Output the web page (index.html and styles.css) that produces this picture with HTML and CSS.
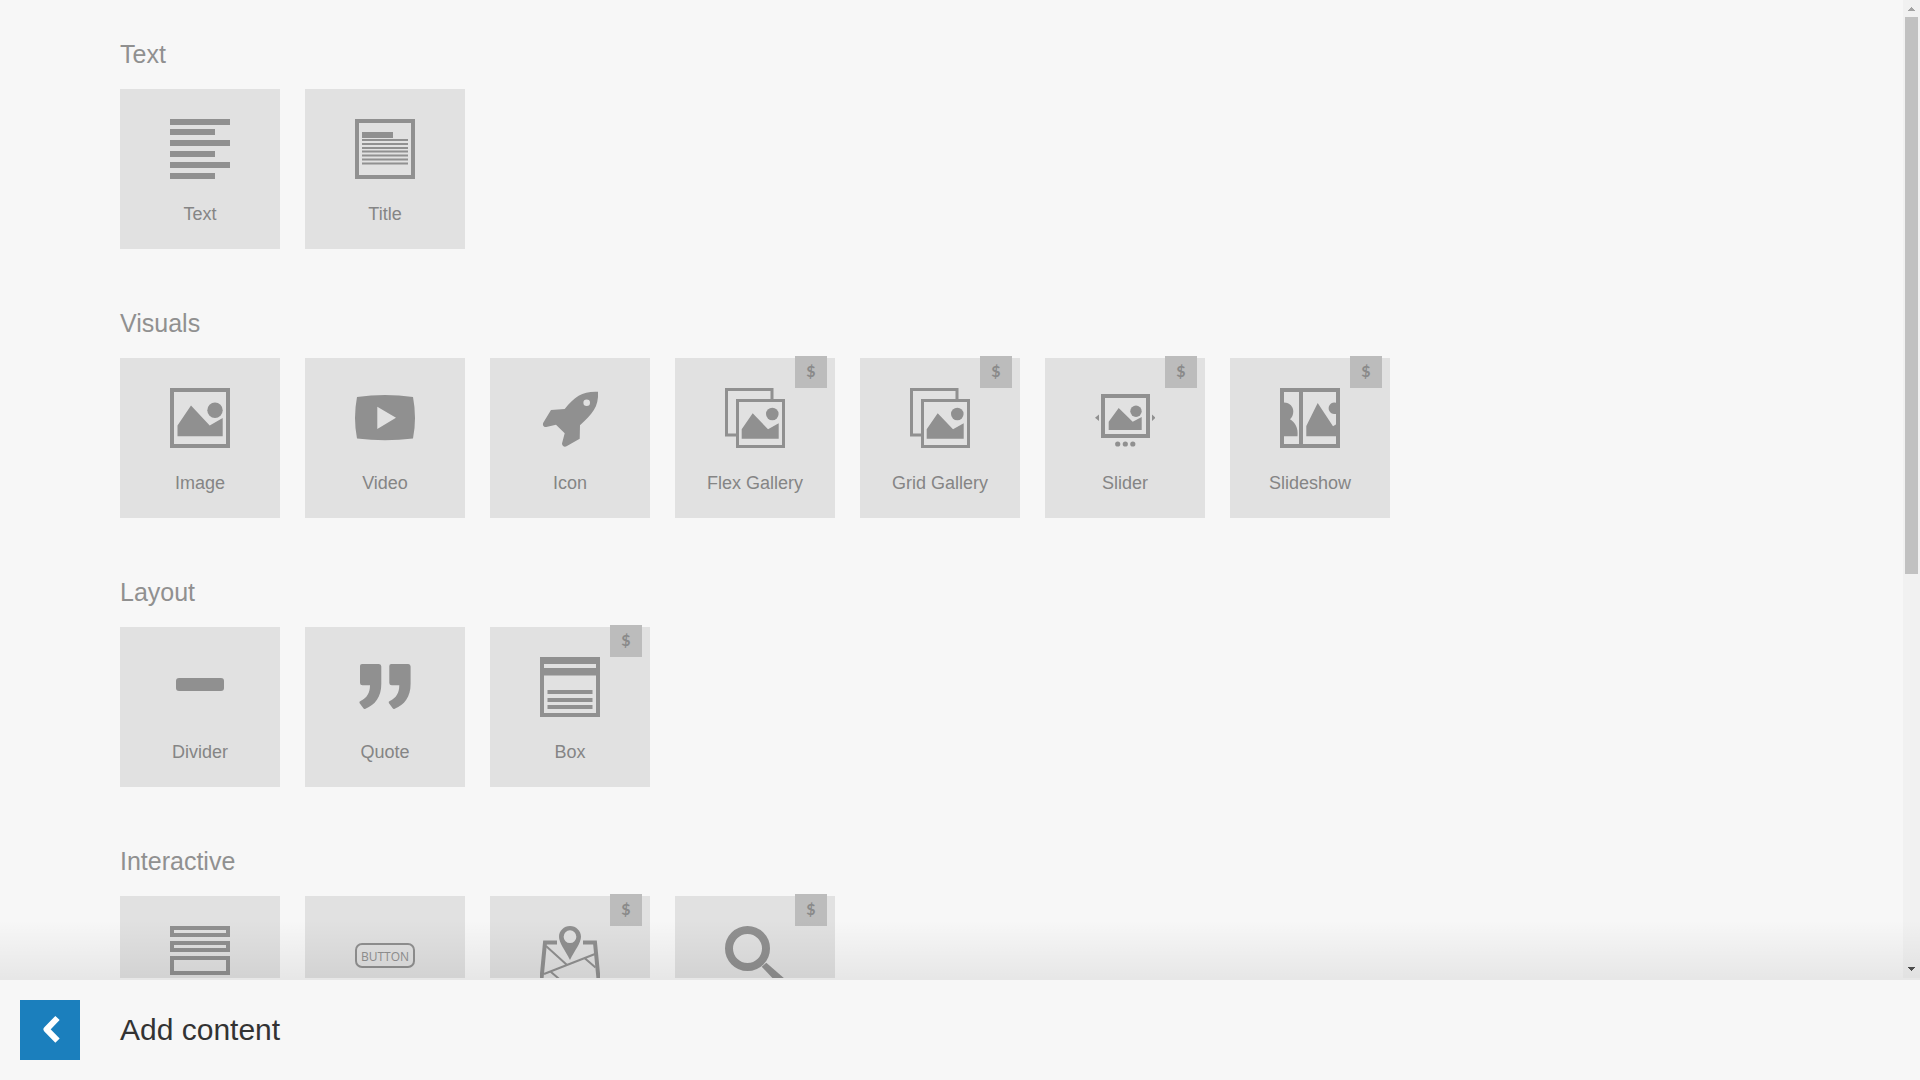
FILE: index.html
```html
<!DOCTYPE html>
<html lang="en">
<head>
<meta charset="utf-8">
<title>Add content</title>
<link rel="stylesheet" href="styles.css">
</head>
<body>
<div class="viewport">
<main class="picker">
  <section class="group">
    <h2 class="group-title">Text</h2>
    <div class="tiles">
      <button class="tile" type="button">
        <svg class="icon" viewBox="0 0 60 60"><path d="M0 0h60v6H0zM0 10h45v6H0zM0 21h60v6H0zM0 32h45v6H0zM0 43h60v6H0zM0 54h45v6H0z"/></svg>
        <span>Text</span>
      </button>
      <button class="tile" type="button">
        <svg class="icon" viewBox="0 0 60 60"><path class="line w4" d="M2 2h56v56H2z"/><path d="M7 13h31v6H7zM7 20h46v2H7zM7 24h46v2H7zM7 28h46v2H7zM7 31.500h46v2H7zM7 35.500h46v2H7zM7 39.500h46v2H7zM7 43.500h46v2H7z"/></svg>
        <span>Title</span>
      </button>
    </div>
  </section>

  <section class="group">
    <h2 class="group-title">Visuals</h2>
    <div class="tiles">
      <button class="tile" type="button">
        <svg class="icon" viewBox="0 0 60 60"><path class="line w4" d="M2 2h56v56H2z"/><path d="M7.500 37.500L21 17.500l18.700 20L52.700 30v18.300H7.500z"/><circle cx="45" cy="22.300" r="7.700"/></svg>
        <span>Image</span>
      </button>
      <button class="tile" type="button">
        <svg class="icon" viewBox="0 0 60 60"><path fill-rule="evenodd" d="M2 9Q30 5 58 9Q62 30 58 50.500Q30 54 2 50.500Q-2 30 2 9zM22.300 18.700V41L41 29.700z"/></svg>
        <span>Video</span>
      </button>
      <button class="tile" type="button">
        <svg class="icon" viewBox="0 0 60 60"><path fill-rule="evenodd" d="M58 3.700C43 3 35 8 24.700 21L11 22L3.400 34.500C2 37 4 39.500 6.300 39L16 36.700L24.700 45.300L22 55.500C22 58 24.500 59.500 26.500 58.300L39.700 50.700L40 37.300C52 26 59 19 58 3.700zM46.700 11.400a3.300 3.300 0 1 1 0 6.600a3.300 3.300 0 1 1 0-6.600z"/></svg>
        <span>Icon</span>
      </button>
      <button class="tile" type="button">
        <svg class="icon" viewBox="0 0 60 60"><path class="line w3" d="M11 47H1.500V1.500H47V11M12.500 12.500h46v46h-46z"/><path d="M16.700 41.300l11-16 15.300 16 10.700-6v15.400h-37z"/><circle cx="47.300" cy="26" r="6.300"/></svg>
        <span>Flex Gallery</span><span class="badge">$</span>
      </button>
      <button class="tile" type="button">
        <svg class="icon" viewBox="0 0 60 60"><path class="line w3" d="M11 47H1.500V1.500H47V11M12.500 12.500h46v46h-46z"/><path d="M16.700 41.300l11-16 15.300 16 10.700-6v15.400h-37z"/><circle cx="47.300" cy="26" r="6.300"/></svg>
        <span>Grid Gallery</span><span class="badge">$</span>
      </button>
      <button class="tile" type="button">
        <svg class="icon" viewBox="0 0 60 60"><path class="line w4" d="M8 8h45v40H8z"/><path d="M13.700 33.700l10-13.700 14 13.700 9-4.700v13h-33zM0 29.700l4-3.200v6.400zM60.500 29.700l-3.500-3.200v6.400z"/><circle cx="41" cy="23.300" r="5.700"/><circle cx="22.700" cy="56" r="2.600"/><circle cx="30.300" cy="56" r="2.600"/><circle cx="37.800" cy="56" r="2.600"/></svg>
        <span>Slider</span><span class="badge">$</span>
      </button>
      <button class="tile" type="button">
        <svg class="icon" viewBox="0 0 60 60"><path class="line w4" d="M2 2h56v56H2zM21 2v56"/><path d="M4 14.500C10 14.500 13.300 19 13.300 23.300C13.300 27 12 29.500 10 31.300C15 34 18.500 40 17.500 48.300H4zM26.300 38l11.400-23L53 38.300l4-2.600v12.600H26.300zM57 15.100a5.800 5.800 0 1 0 0 10.400z"/></svg>
        <span>Slideshow</span><span class="badge">$</span>
      </button>
    </div>
  </section>

  <section class="group">
    <h2 class="group-title">Layout</h2>
    <div class="tiles">
      <button class="tile" type="button">
        <svg class="icon" viewBox="0 0 60 60"><rect x="6" y="21" width="48" height="13" rx="3"/></svg>
        <span>Divider</span>
      </button>
      <button class="tile" type="button">
        <svg class="icon" viewBox="0 0 60 60"><path id="mark" d="M7 7H24Q26.300 7 26.300 9.500V27C26.300 40 20 48 10.500 51.700Q9 52.400 8.200 51L4.500 46Q4 44.500 5.500 44C12 41 15 36 15 28.300H7.500Q5 28.300 5 26V9Q5 7 7 7z"/><use href="#mark" x="29.300"/></svg>
        <span>Quote</span>
      </button>
      <button class="tile" type="button">
        <svg class="icon" viewBox="0 0 60 60"><path fill-rule="evenodd" d="M0 0h60v60H0zM4 7v4h52V7zM4 18.500V56h52V18.500z"/><path d="M7.500 33h45v4h-45zM7.500 41h45v4h-45zM7.500 48h45v4h-45z"/></svg>
        <span>Box</span><span class="badge">$</span>
      </button>
    </div>
  </section>

  <section class="group">
    <h2 class="group-title">Interactive</h2>
    <div class="tiles">
      <button class="tile" type="button" aria-label="Form">
        <svg class="icon" viewBox="0 0 60 60"><path class="line w4" d="M2 2h56v7H2zM2 17h56v7H2zM2 32h56v15H2z"/></svg>
      </button>
      <button class="tile" type="button" aria-label="Button">
        <svg class="icon" viewBox="0 0 60 60"><rect class="line w2" x="1" y="18" width="58" height="23" rx="6"/><text class="icon-text" x="30" y="34.500" text-anchor="middle">BUTTON</text></svg>
      </button>
      <button class="tile" type="button" aria-label="Map">
        <svg class="icon" viewBox="0 0 60 60"><path fill-rule="evenodd" d="M30 0C36 0 41 4.800 41 10.800C41 17 35 24 30 34C25 24 19 17 19 10.800C19 4.800 24 0 30 0zM30 4.300a6.300 6.300 0 1 0 0 12.700a6.300 6.300 0 1 0 0-12.700z"/><path class="line w4" d="M17 16.500H5L1 58M43 16.500h12L59 58"/><path class="line w2" d="M6 20l21 19M4 48l51-20M44.500 32l11 9.500M11 46l14 12"/></svg>
        <span class="badge">$</span>
      </button>
      <button class="tile" type="button" aria-label="Search">
        <svg class="icon" viewBox="0 0 60 60"><circle class="line w8" cx="22.500" cy="22.500" r="18.500"/><path d="M36.700 40.700l4.600-4L60 53q1 5-5 7z"/></svg>
        <span class="badge">$</span>
      </button>
    </div>
  </section>
</main>
<div class="scrollbar">
  <svg class="arrow" viewBox="0 0 17 17"><path class="arrow-off" d="M8 7h1v1h1v1h1v1h1v1H5v-1h1V9h1V8h1z"/></svg>
  <div class="thumb"></div>
  <svg class="arrow" viewBox="0 0 17 17"><path class="arrow-on" d="M5 6h7v1h-1v1h-1v1H9v1H8V9H7V8H6V7H5z"/></svg>
</div>
</div>
<footer class="bar">
  <button class="back" type="button" aria-label="Back"><svg class="icon" viewBox="0 0 60 60"><path d="M37.500 18L26.500 29.300L37.500 40.700"/></svg></button>
  <h1 class="bar-title">Add content</h1>
</footer>
</body>
</html>
```
FILE: styles.css
```css
* {
  box-sizing: border-box;
}

body {
  display: flex;
  flex-direction: column;
  height: 100vh;
  margin: 0;
  background: #f7f7f7;
  font-family: "Liberation Sans", Arial, sans-serif;
}

h1,
h2 {
  margin: 0;
  font-weight: 400;
}

button {
  margin: 0;
  padding: 0;
  border: 0;
  font: inherit;
  cursor: pointer;
}

.viewport {
  position: relative;
  display: flex;
  flex: 1;
  min-height: 0;
  padding-bottom: 2px;
}

/* Fade that darkens the content where it runs under the bottom bar */
.viewport::after {
  content: "";
  position: absolute;
  inset: auto 0 0 0;
  height: 60px;
  background: linear-gradient(rgba(0, 0, 0, 0), rgba(0, 0, 0, 0.065));
  pointer-events: none;
}

.picker {
  flex: 1;
  display: flex;
  flex-direction: column;
  gap: 59px;
  padding: 39px 120px;
  overflow-y: auto;
  scrollbar-width: none;
}

.group-title {
  margin-bottom: 20px;
  color: #909090;
  font-size: 25px;
  line-height: 30px;
}

.tiles {
  display: flex;
  flex-wrap: wrap;
  gap: 25px;
}

.tile {
  position: relative;
  display: flex;
  flex-direction: column;
  align-items: center;
  gap: 25px;
  width: 160px;
  height: 160px;
  padding-top: 30px;
  background: #e1e1e1;
  color: #858585;
  font-size: 18px;
  line-height: 20px;
}

.icon {
  display: block;
  width: 60px;
  height: 60px;
  fill: #909090;
}

.line {
  fill: none;
  stroke: #909090;
}

.w2 { stroke-width: 2px; }
.w3 { stroke-width: 3px; }
.w4 { stroke-width: 4px; }
.w8 { stroke-width: 8px; }

.icon-text {
  font: 12px "Open Sans", sans-serif;
}

.badge {
  position: absolute;
  top: -2px;
  right: 8px;
  width: 32px;
  height: 32px;
  background: #bcbcbc;
  color: #8a8a8a;
  font: bold 16px/30px Lato, sans-serif;
}

.scrollbar {
  display: flex;
  flex-direction: column;
  width: 17px;
  background: #f1f1f1;
}

.arrow {
  width: 17px;
  height: 17px;
}

.arrow-off { fill: #a3a3a3; }
.arrow-on { fill: #505050; }

.thumb {
  flex: 0 1 557px;
  margin: 0 2px auto;
  background: #c1c1c1;
}

.bar {
  display: flex;
  align-items: center;
  gap: 40px;
  height: 100px;
  padding: 0 20px;
  background: #f7f7f7;
}

.back {
  background: #1b7fbd;
}

.back path {
  fill: none;
  stroke: #fff;
  stroke-width: 6px;
  stroke-linejoin: round;
}

.bar-title {
  color: #333;
  font-size: 30px;
  line-height: 40px;
}
```
